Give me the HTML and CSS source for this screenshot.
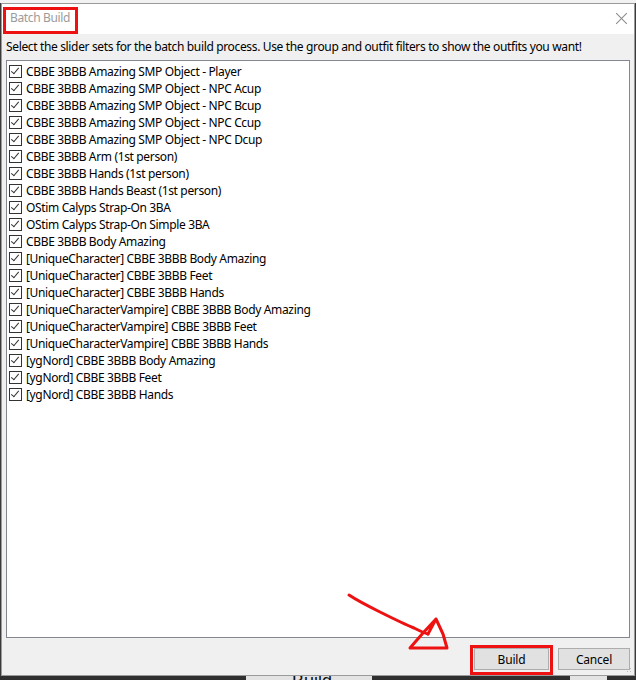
FILE: index.html
```html
<!DOCTYPE html>
<html lang="en">
<head>
  <meta charset="UTF-8">
  <title>Batch Build</title>
  <link rel="stylesheet" href="styles.css">
</head>
<body>
<div class="dialog">
  <!-- title bar -->
  <div class="titlebar">
    <span class="title">Batch Build</span>
    <span class="close-x"></span>
  </div>

  <p class="hint">Select the slider sets for the batch build process. Use the group and outfit filters to show the outfits you want!</p>

  <ul class="set-list">
    <li><span class="box"></span>CBBE 3BBB Amazing SMP Object - Player</li>
    <li><span class="box"></span>CBBE 3BBB Amazing SMP Object - NPC Acup</li>
    <li><span class="box"></span>CBBE 3BBB Amazing SMP Object - NPC Bcup</li>
    <li><span class="box"></span>CBBE 3BBB Amazing SMP Object - NPC Ccup</li>
    <li><span class="box"></span>CBBE 3BBB Amazing SMP Object - NPC Dcup</li>
    <li><span class="box"></span>CBBE 3BBB Arm (1st person)</li>
    <li><span class="box"></span>CBBE 3BBB Hands (1st person)</li>
    <li><span class="box"></span>CBBE 3BBB Hands Beast (1st person)</li>
    <li><span class="box"></span>OStim Calyps Strap-On 3BA</li>
    <li><span class="box"></span>OStim Calyps Strap-On Simple 3BA</li>
    <li><span class="box"></span>CBBE 3BBB Body Amazing</li>
    <li><span class="box"></span>[UniqueCharacter] CBBE 3BBB Body Amazing</li>
    <li><span class="box"></span>[UniqueCharacter] CBBE 3BBB Feet</li>
    <li><span class="box"></span>[UniqueCharacter] CBBE 3BBB Hands</li>
    <li><span class="box"></span>[UniqueCharacterVampire] CBBE 3BBB Body Amazing</li>
    <li><span class="box"></span>[UniqueCharacterVampire] CBBE 3BBB Feet</li>
    <li><span class="box"></span>[UniqueCharacterVampire] CBBE 3BBB Hands</li>
    <li><span class="box"></span>[ygNord] CBBE 3BBB Body Amazing</li>
    <li><span class="box"></span>[ygNord] CBBE 3BBB Feet</li>
    <li><span class="box"></span>[ygNord] CBBE 3BBB Hands</li>
  </ul>

  <div class="footer">
    <button class="btn btn-build">Build</button>
    <button class="btn btn-cancel">Cancel</button>
    <span class="grip"></span>
  </div>
</div>

<!-- window behind the dialog -->
<div class="behind">
  <span class="seg dark" style="width: 246px"></span>
  <span class="seg light" style="width: 126px"><em>Build</em></span>
  <span class="seg dark" style="width: 198px"></span>
  <span class="seg light" style="width: 37px"></span>
  <span class="seg dark" style="width: 29px"></span>
</div>

<!-- red markup drawn on top -->
<div class="mark mark-title"></div>
<div class="mark mark-build"></div>
<svg class="scribble" width="636" height="680" viewBox="0 0 636 680">
  <path d="M349 595 C358 601 368 606 380 612 C392 618 404 624 414 628 C420 631 424 633 428 634"
        fill="none" stroke="#ee1111" stroke-width="3" stroke-linecap="round" stroke-linejoin="round"/>
  <path d="M436 619 L423 633 L410 648 L447 648 L443 634 Z M436 619 L428 634"
        fill="none" stroke="#ee1111" stroke-width="3" stroke-linecap="round" stroke-linejoin="round"/>
</svg>
</body>
</html>
```

FILE: styles.css
```css
body {
  margin: 0;
  width: 636px;
  height: 680px;
  overflow: hidden;
  padding-top: 3px;
  box-sizing: border-box;
  background: linear-gradient(#f2f2f2 0 3px, #3b3b3b 3px);
  font-family: "Noto Sans", "Open Sans", sans-serif;
  font-size: 12px;
  letter-spacing: -0.35px;
  color: #000;
  position: relative;
}

.dialog {
  margin-left: 1px;
  width: 634px;
  height: 673px;
  box-sizing: border-box;
  border: 1px solid #9a9a9a;
  background-color: #f0f0f0;
  display: flex;
  flex-direction: column;
}

/* title bar (inactive) */
.titlebar {
  height: 30px;
  flex: none;
  background-color: #fff;
  display: flex;
  align-items: center;
  justify-content: space-between;
  padding: 0 7px 0 8px;
  box-sizing: border-box;
}

.title {
  color: #9b9b9b;
  line-height: 16px;
  padding-bottom: 2px;
}

.close-x {
  width: 11px;
  height: 11px;
  position: relative;
  margin-bottom: 1px;
}

.close-x::before,
.close-x::after {
  content: "";
  position: absolute;
  left: 5px;
  top: -2px;
  width: 1px;
  height: 15px;
  background-color: #8a8a8a;
  transform: rotate(45deg);
}

.close-x::after {
  transform: rotate(-45deg);
}

.hint {
  margin: 0;
  height: 26px;
  flex: none;
  padding: 5px 0 0 4px;
  box-sizing: border-box;
  line-height: 16px;
  white-space: nowrap;
}

/* list of slider sets */
.set-list {
  list-style: none;
  margin: 0 4px;
  padding: 2px 0 0 0;
  height: 578px;
  flex: none;
  box-sizing: border-box;
  border: 1px solid #828790;
  background-color: #fff;
}

.set-list li {
  height: 17px;
  display: flex;
  align-items: center;
  gap: 4px;
  padding-left: 2px;
  white-space: nowrap;
}

.box {
  width: 13px;
  height: 13px;
  flex: none;
  box-sizing: border-box;
  border: 1px solid #333;
  background-color: #fff;
  position: relative;
}

.box::after {
  content: "";
  position: absolute;
  left: 3px;
  top: 0;
  width: 3px;
  height: 7px;
  border: solid #333;
  border-width: 0 1px 1px 0;
  transform: rotate(40deg);
}

.footer {
  height: 37px;
  flex: none;
  display: flex;
  justify-content: flex-end;
  gap: 9px;
  padding: 10px 4px 0 0;
  box-sizing: border-box;
  position: relative;
}

.btn {
  height: 22px;
  padding: 0;
  border: 1px solid #adadad;
  background-color: #e1e1e1;
  font-family: inherit;
  font-size: 12px;
  letter-spacing: -0.2px;
  color: #000;
}

.btn-build {
  width: 75px;
}

.btn-cancel {
  width: 72px;
}

/* resize grip */
.grip {
  position: absolute;
  right: 1px;
  bottom: 1px;
  width: 10px;
  height: 10px;
  background-image: radial-gradient(#bdbdbd 0.8px, transparent 1px);
  background-size: 3px 3px;
  clip-path: polygon(100% 0, 100% 100%, 0 100%);
}

/* strip of the window underneath */
.behind {
  display: flex;
  height: 4px;
  overflow: hidden;
}

.seg {
  height: 4px;
  flex: none;
  position: relative;
}

.seg.dark {
  background-color: #2f2f2f;
}

.seg.light {
  background-color: #e3e3e3;
}

.seg em {
  position: absolute;
  left: 46px;
  top: -4px;
  font-style: normal;
  font-family: "Liberation Sans", sans-serif;
  font-size: 18px;
  line-height: 18px;
  letter-spacing: 0;
  color: #111;
}

/* red highlight boxes */
.mark {
  position: absolute;
  border: 3px solid #ee1111;
  box-sizing: border-box;
}

.mark-title {
  left: 3px;
  top: 7px;
  width: 75px;
  height: 27px;
}

.mark-build {
  left: 470px;
  top: 645px;
  width: 83px;
  height: 30px;
}

.scribble {
  position: absolute;
  left: 0;
  top: 0;
  pointer-events: none;
}
```
